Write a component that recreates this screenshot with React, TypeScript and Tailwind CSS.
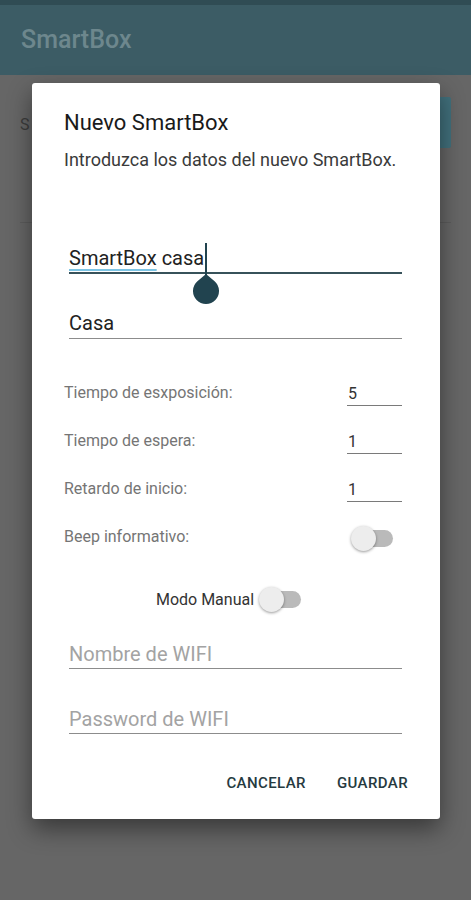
import React from "react";

function Toggle() {
  return (
    <div className="relative h-[25px] w-[42px] shrink-0">
      <div className="absolute left-[8px] right-0 top-[4px] h-[17px] rounded-full bg-[#bababa]" />
      <div className="absolute left-0 top-0 h-[25px] w-[25px] rounded-full bg-[#ededed] shadow-[0_1px_3px_rgba(0,0,0,0.4)]" />
    </div>
  );
}

const ROWS = [
  { label: "Tiempo de esxposición:", value: "5" },
  { label: "Tiempo de espera:", value: "1" },
  { label: "Retardo de inicio:", value: "1" },
];

export default function App() {
  return (
    <div className="relative h-[900px] w-[471px] overflow-hidden bg-[#666666] font-['Roboto',sans-serif]">
      {/* App behind the dialog (already dimmed) */}
      <div className="h-[5px] bg-[#304c54]" />
      <div className="flex h-[70px] items-center bg-[#3c5c65] px-[21px]">
        <span className="text-[25px] font-medium text-[#6d878d]">SmartBox</span>
      </div>
      <div className="px-[20px]">
        <div className="flex items-start justify-between pt-[22px]">
          <span className="mt-[16px] text-[16px] text-[#3c3c3c]">S</span>
          <div className="h-[51px] w-[80px] rounded-[2px] bg-[#41707c]" />
        </div>
        <div className="mt-[74px] h-px bg-[#5c5c5c]" />
      </div>

      {/* Dialog */}
      <div className="absolute inset-0">
        <div className="ml-[32px] mt-[83px] h-[736px] w-[408px] rounded-[3px] bg-white px-[32px] pt-[27px] shadow-[0_10px_24px_rgba(0,0,0,0.45)]">
          <h2 className="text-[22px] leading-[26px] text-[#1a1a1a]">Nuevo SmartBox</h2>
          <p className="mt-[13px] text-[18px] leading-[22px] text-[#3a3a3a]">
            Introduzca los datos del nuevo SmartBox.
          </p>

          {/* Name field (focused) */}
          <div className="ml-[5px] mr-[6px] mt-[74px] border-b-2 border-[#37525a] pb-[1px]">
            <div className="text-[20px] leading-[26px] text-[#222222]">
              <span className="underline decoration-[#7cc4e4] decoration-2 underline-offset-[4px]">SmartBox</span>
              <span> casa</span>
              <span className="relative inline-block h-[26px] w-0 align-top">
                <span className="absolute left-[1px] top-[-2px] h-[32px] w-[2px] bg-[#21434f]" />
                <svg
                  className="absolute left-[-11px] top-[28px]"
                  width="26"
                  height="31"
                  viewBox="0 0 26 31"
                >
                  <path d="M13 1 L21.6 8.2 A13 13 0 1 1 4.4 8.2 Z" fill="#21434f" />
                </svg>
              </span>
            </div>
          </div>

          {/* Place field */}
          <div className="ml-[5px] mr-[6px] mt-[36px] border-b border-[#8c8c8c] pb-[2px]">
            <div className="text-[20px] leading-[26px] text-[#222222]">Casa</div>
          </div>

          {/* Numeric rows */}
          <div className="mr-[6px] mt-[30px]">
            {ROWS.map((r) => (
              <div key={r.label} className="flex h-[48px] items-center justify-between">
                <span className="text-[16px] text-[#757575]">{r.label}</span>
                <div className="mt-[3px] w-[55px] border-b border-[#7a7a7a] pb-[1px] pl-[1px] text-[16px] leading-[20px] text-[#333333]">
                  {r.value}
                </div>
              </div>
            ))}
            <div className="flex h-[48px] items-center justify-between">
              <span className="text-[16px] text-[#757575]">Beep informativo:</span>
              <div className="mr-[9px] mt-[2px]">
                <Toggle />
              </div>
            </div>
          </div>

          {/* Modo manual */}
          <div className="mt-[26px] flex h-[25px] items-center justify-center pr-[15px]">
            <span className="text-[16px] text-[#333333]">Modo Manual</span>
            <div className="ml-[5px]">
              <Toggle />
            </div>
          </div>

          {/* WIFI fields */}
          <div className="ml-[5px] mr-[6px] mt-[29px] border-b border-[#8c8c8c] pb-[1px]">
            <div className="text-[20px] leading-[26px] text-[#a3a3a3]">Nombre de WIFI</div>
          </div>
          <div className="ml-[5px] mr-[6px] mt-[37px] border-b border-[#8c8c8c] pb-[1px]">
            <div className="text-[20px] leading-[26px] text-[#a3a3a3]">Password de WIFI</div>
          </div>

          {/* Actions */}
          <div className="mt-[39px] flex justify-end gap-[31px]">
            <button className="text-[15px] font-medium leading-[20px] tracking-[0.4px] text-[#263a40]">
              CANCELAR
            </button>
            <button className="text-[15px] font-medium leading-[20px] tracking-[0.4px] text-[#263a40]">
              GUARDAR
            </button>
          </div>
        </div>
      </div>
    </div>
  );
}
